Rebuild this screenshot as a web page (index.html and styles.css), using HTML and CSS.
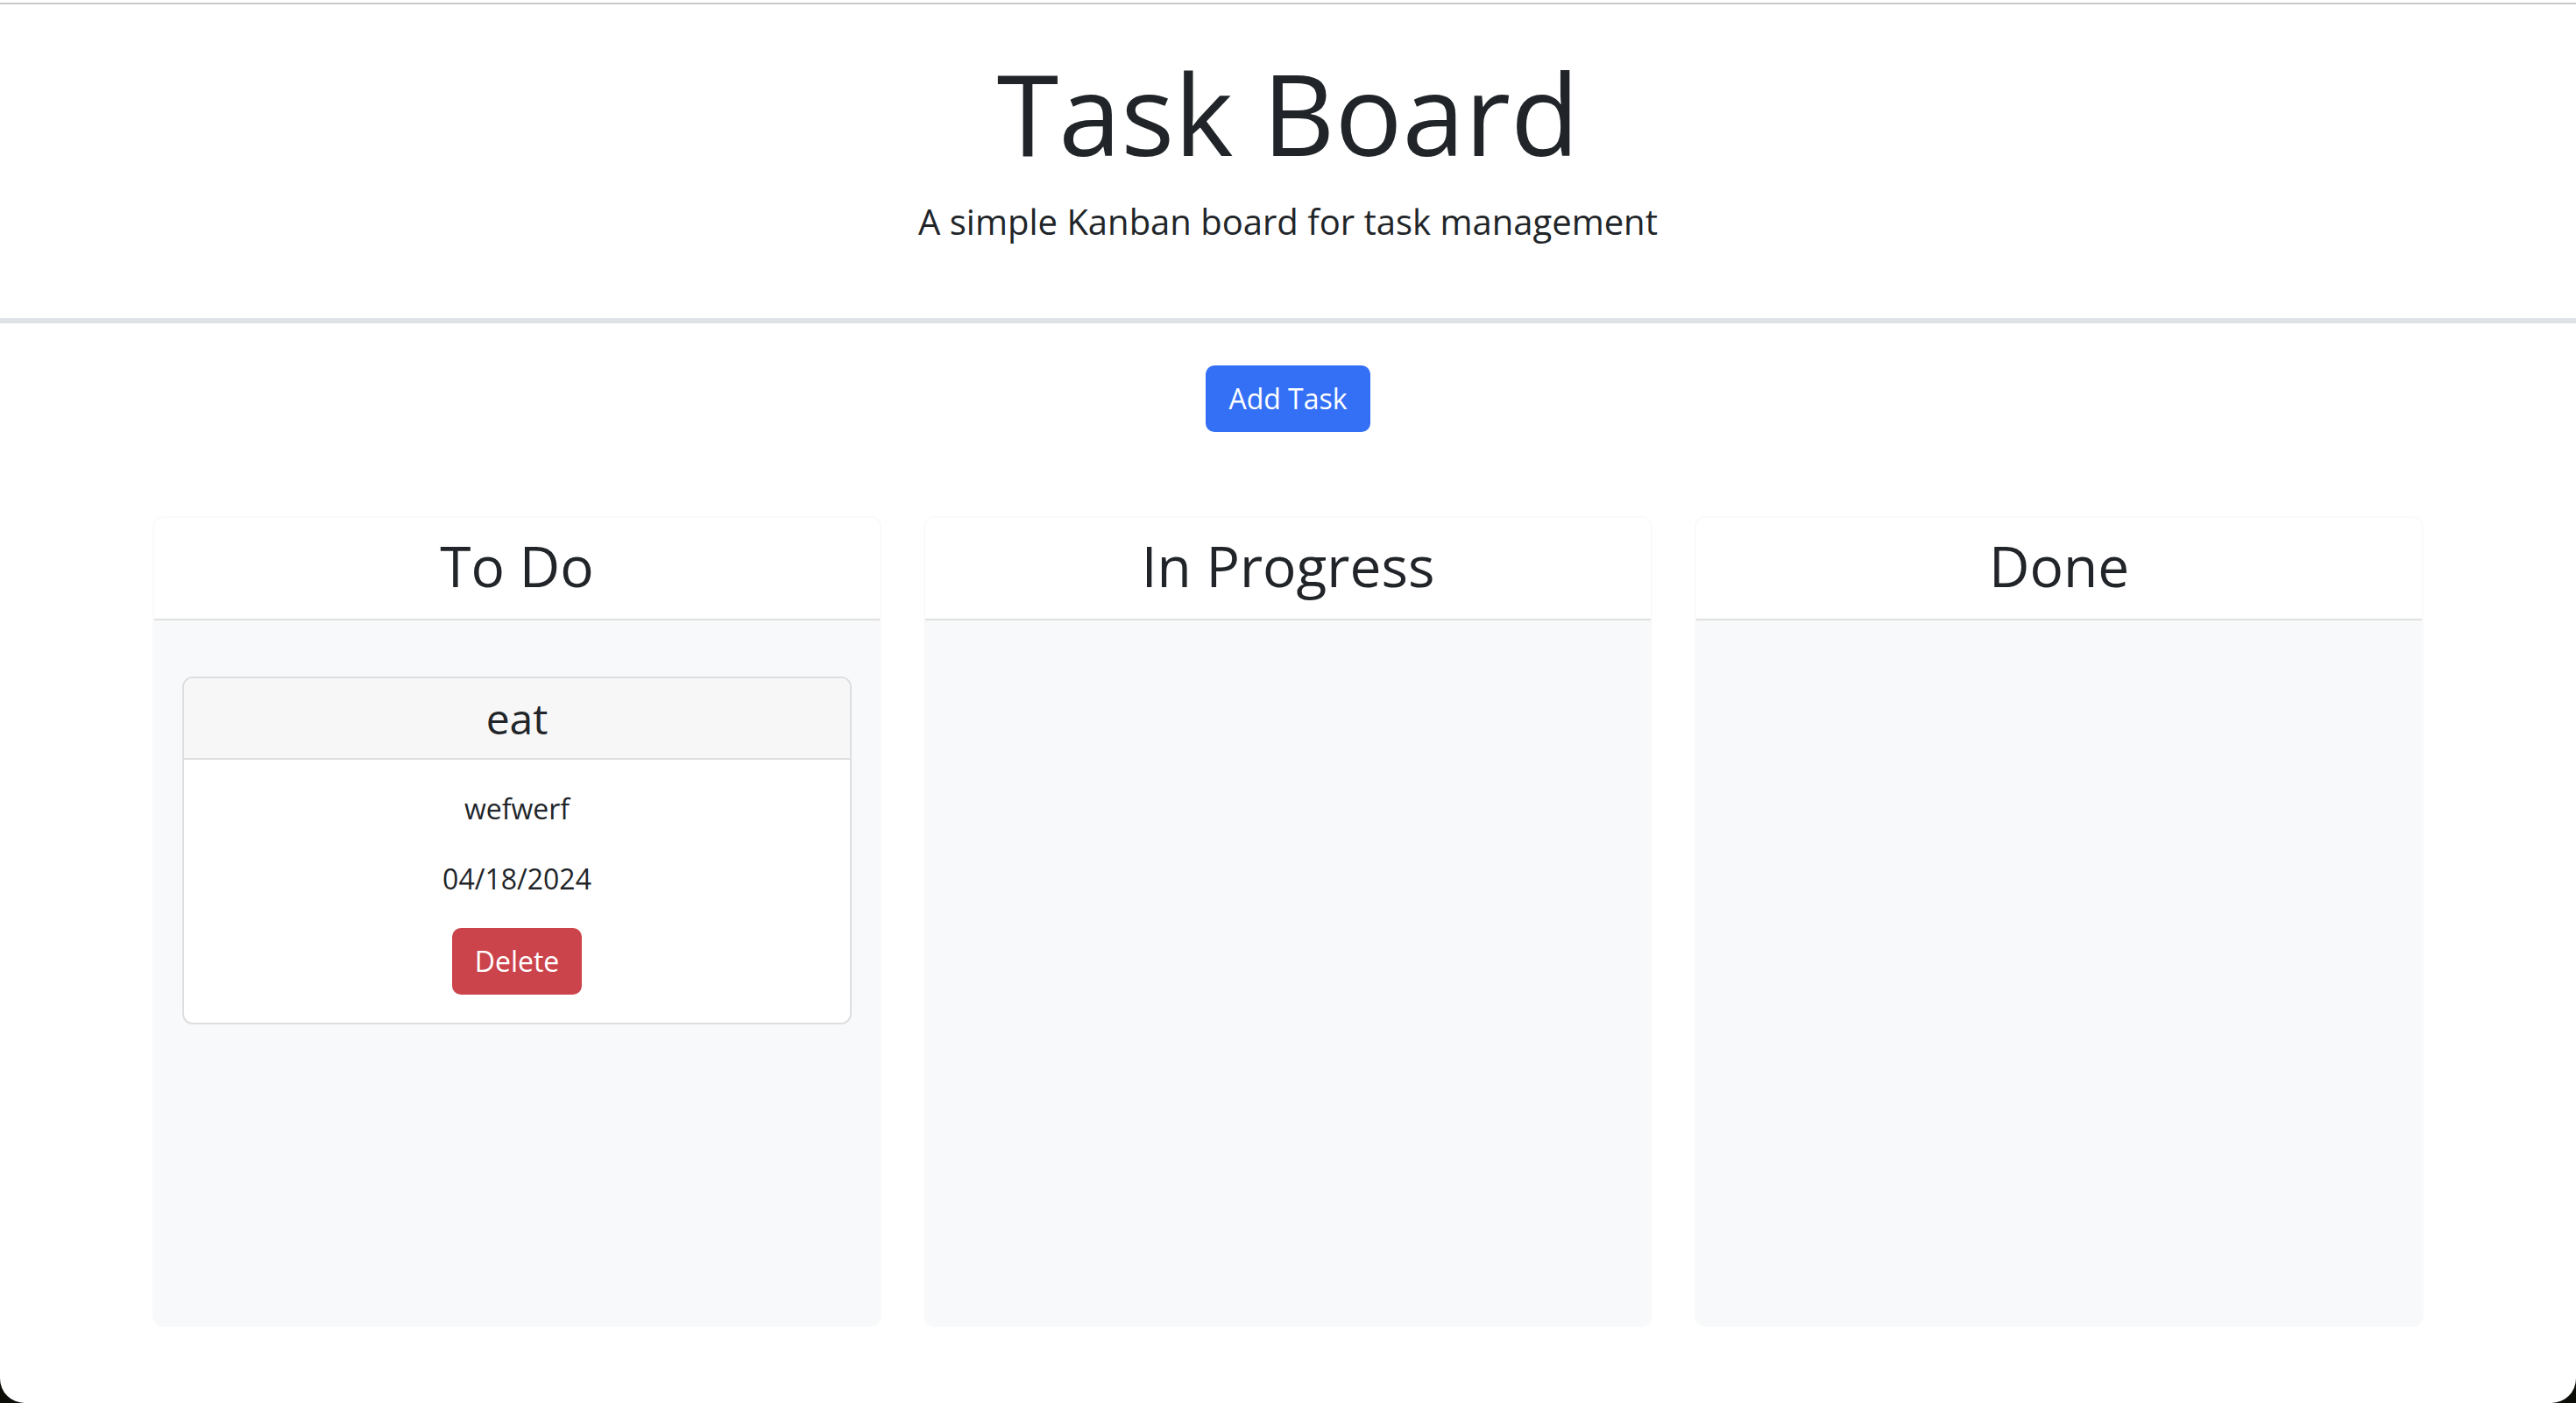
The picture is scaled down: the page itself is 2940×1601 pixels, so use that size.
FILE: index.html
```html
<!DOCTYPE html>
<html lang="en">
<head>
<meta charset="utf-8">
<title>Task Board</title>
<link rel="stylesheet" href="styles.css">
</head>
<body>
<div class="window">
  <header class="page-header">
    <h1 class="title">Task Board</h1>
    <p class="lead">A simple Kanban board for task management</p>
  </header>
  <main class="main">
    <div class="actions">
      <button class="btn btn-primary" type="button">Add Task</button>
    </div>
    <section class="board">
      <div class="lane">
        <div class="lane-header"><h2 class="lane-title">To Do</h2></div>
        <div class="lane-body">
          <div class="task">
            <div class="task-header"><h4 class="task-title">eat</h4></div>
            <div class="task-body">
              <p class="task-text">wefwerf</p>
              <p class="task-text">04/18/2024</p>
              <button class="btn btn-danger" type="button">Delete</button>
            </div>
          </div>
        </div>
      </div>
      <div class="lane">
        <div class="lane-header"><h2 class="lane-title">In Progress</h2></div>
        <div class="lane-body"></div>
      </div>
      <div class="lane">
        <div class="lane-header"><h2 class="lane-title">Done</h2></div>
        <div class="lane-body"></div>
      </div>
    </section>
  </main>
</div>
</body>
</html>
```
FILE: styles.css
```css
* {
  box-sizing: border-box;
}

html {
  background: #0d0d08;
  margin: 0;
  padding: 0;
}

body {
  margin: 0;
  padding: 0;
  font-family: "Open Sans", "Liberation Sans", sans-serif;
  color: #212529;
}

.window {
  height: 1601px;
  background: #fff;
  padding-top: 3px;
  border-radius: 0 0 28px 28px;
  overflow: hidden;
}

.page-header {
  border-top: 2px solid #c8c8c8;
  border-bottom: 6px solid #dee2e6;
  text-align: center;
  padding: 47px 0 80px;
}

.title {
  margin: 0 0 17px;
  font-size: 128px;
  font-weight: 400;
  line-height: 1.2;
}

.lead {
  margin: 0;
  font-size: 40px;
  line-height: 60px;
  font-weight: 400;
}

.main {
  padding-top: 48px;
}

.actions {
  display: flex;
  justify-content: center;
}

.btn {
  font-family: inherit;
  font-size: 32px;
  line-height: 48px;
  padding: 12px 24px;
  border: 2px solid transparent;
  border-radius: 10px;
  color: #fff;
  cursor: pointer;
}

.btn-primary {
  background: #3370f5;
  border-color: #3370f5;
}

.btn-danger {
  background: #cb444b;
  border-color: #cb444b;
}

.board {
  display: grid;
  grid-template-columns: repeat(3, 1fr);
  gap: 48px;
  width: 2592px;
  margin: 96px auto 0;
}

.lane {
  border: 2px solid #fafafa;
  border-bottom: 0;
  border-radius: 12px;
  overflow: hidden;
  background: #f8f9fa;
}

.lane-header {
  background: #fff;
  border-bottom: 2px solid #dfdfdf;
  padding: 17px 0 22px;
  text-align: center;
}

.lane-title {
  margin: 0;
  font-size: 64px;
  font-weight: 400;
  line-height: 1.2;
}

.lane-body {
  min-height: 806px;
  padding: 64px 32px 32px;
}

.task {
  background: #fff;
  border: 2px solid #dedede;
  border-radius: 12px;
  overflow: hidden;
  text-align: center;
}

.task-header {
  background: #f7f7f7;
  border-bottom: 2px solid #dedede;
  padding: 17px 0 16px;
}

.task-title {
  margin: 0;
  font-size: 48px;
  font-weight: 400;
  line-height: 1.2;
}

.task-body {
  padding: 32px 32px 32px;
}

.task-text {
  margin: 0 0 32px;
  font-size: 32px;
  line-height: 48px;
}
```
